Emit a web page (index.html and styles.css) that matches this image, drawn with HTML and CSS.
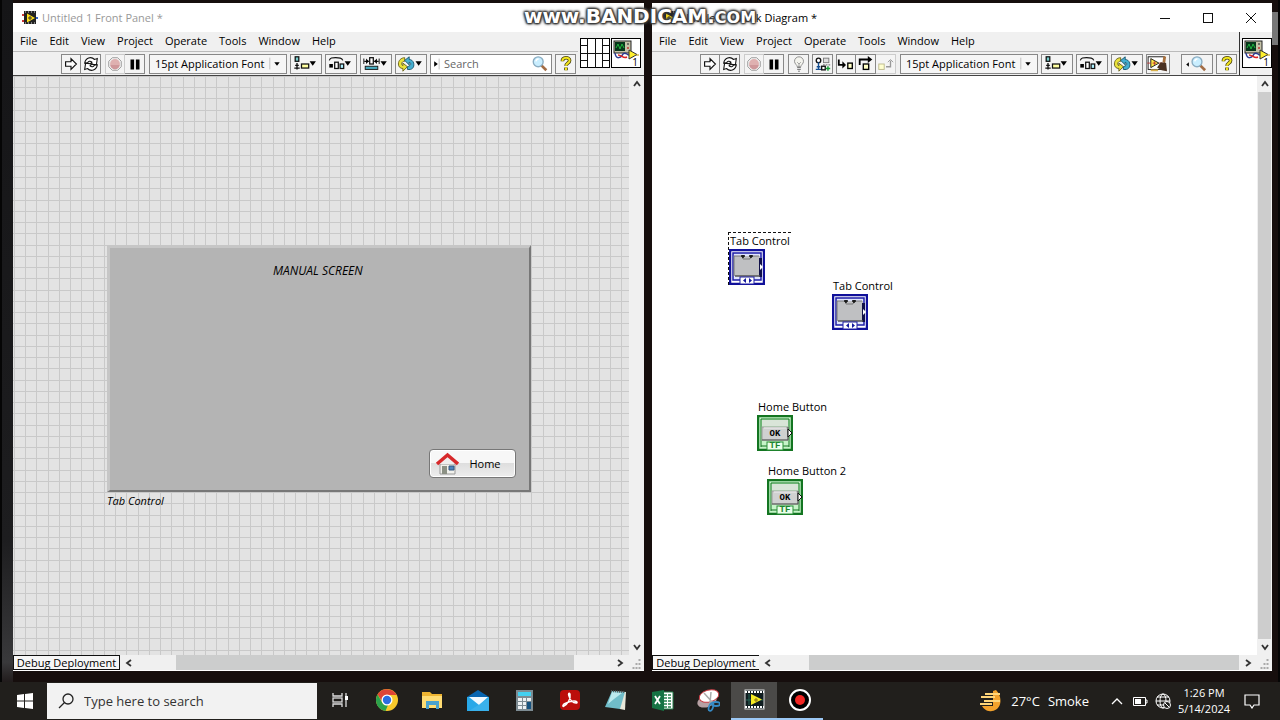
FILE: index.html
```html
<!DOCTYPE html>
<html lang="en">
<head>
<meta charset="utf-8">
<title>Untitled 1 Front Panel</title>
<link rel="stylesheet" href="styles.css">
</head>
<body>
<svg class="sprite" aria-hidden="true">
  <symbol id="app" viewBox="0 0 16 16">
    <path d="M0 5h3M0 11h3" stroke="#c33" stroke-width="2"/><path d="M13 8h3" stroke="#36c" stroke-width="2"/>
    <rect x="2" y="1" width="12" height="13" fill="#222"/><path d="M3 2h1M6 2h1M9 2h1M12 2h1M3 13h1M6 13h1M9 13h1M12 13h1" stroke="#ddd"/>
    <path d="M5 3.500L13 8 5 12.500z" fill="#ffe01a"/><path d="M6 8h4M8 6v4" stroke="#333"/>
  </symbol>
  <symbol id="run" viewBox="0 0 20 20"><path d="M4 7.500h6V4l6 6-6 6v-3.500H4z" fill="#fff" stroke="#111" stroke-width="1.300"/></symbol>
  <symbol id="runloop" viewBox="0 0 20 20"><g fill="#fff" stroke="#111" stroke-width="1.200"><path d="M3 9c1-6 7-8 11-4l3-1-1 7-7-1 2-2c-2-2-4-1-5 1z"/><path d="M17 11c-1 6-7 8-11 4l-3 1 1-7 7 1-2 2c2 2 4 1 5-1z"/></g></symbol>
  <symbol id="stop" viewBox="0 0 20 20"><path d="M7 3h6l4 4v6l-4 4H7l-4-4V7z" fill="#eee" stroke="#999"/><circle cx="10" cy="10" r="5.500" fill="#dfb0b0"/><path d="M5 11h10a5 5 0 0 1-10 0z" fill="#cf979a"/></symbol>
  <symbol id="pause" viewBox="0 0 20 20"><path d="M5 5h4v11H5zM11 5h4v11h-4z" fill="#000"/></symbol>
  <symbol id="bulb" viewBox="0 0 20 20"><path d="M8 13c0-2-3-3-3-6a5 5 0 0 1 10 0c0 3-3 4-3 6z" fill="#f4f4ee" stroke="#888"/><path d="M8 8l2 2 2-2M10 10v3" fill="none" stroke="#999"/><path d="M8 14h4M8 16h4M9 18h2" stroke="#666"/></symbol>
  <symbol id="retain" viewBox="0 0 20 20"><circle cx="5" cy="6" r="2.500" fill="#fff" stroke="#111" stroke-width="1.500"/><path d="M5 8v8M2 16h6M3 13h4" stroke="#124d91" stroke-width="1.500"/><rect x="10.500" y="3.500" width="6" height="5" fill="#ddd" stroke="#777"/><path d="M10 11h2M13 11h2M16 11h2" stroke="#555"/><rect x="8.500" y="12.500" width="4" height="4" fill="#fff" stroke="#111" stroke-width="1.500"/><path d="M13 15h5M15.500 12.500v5" stroke="#169b35" stroke-width="1.600"/></symbol>
  <symbol id="into" viewBox="0 0 20 20"><path d="M2 5v6h6" fill="none" stroke="#000" stroke-width="2"/><path d="M6 7l4 4-4 4z"/><rect x="12" y="9" width="5" height="6" fill="#ffffc4" stroke="#000" stroke-width="1.500"/></symbol>
  <symbol id="over" viewBox="0 0 20 20"><path d="M3 11V5h10" fill="none" stroke="#000" stroke-width="2"/><path d="M12 1l5 4-5 4z"/><rect x="7" y="10" width="6" height="6" fill="#ffffc4" stroke="#000" stroke-width="1.500"/></symbol>
  <symbol id="out" viewBox="0 0 20 20"><rect x="2" y="10" width="6" height="6" fill="#ffffd0" stroke="#bbb88a"/><path d="M10 13h5V6" fill="none" stroke="#999" stroke-width="1.500"/><path d="M12 8l3-3 3 3" fill="none" stroke="#999"/></symbol>
  <symbol id="align" viewBox="0 0 32 20"><rect x="4" y="2" width="4" height="5" fill="#7cc" stroke="#111" stroke-width="1.400"/><path d="M6 9v7M3 14.500h6M4 11.500h4" stroke="#111" stroke-width="1.500"/><rect x="11" y="10" width="8" height="4.500" fill="#ffffa0" stroke="#111" stroke-width="1.400"/><path d="M20 7h7l-3.500 5z"/></symbol>
  <symbol id="spread" viewBox="0 0 32 20"><path d="M3 6c1-3 3-3 7-3s7 0 8 3" fill="none" stroke="#111" stroke-width="1.300"/><path d="M3 10h4v4H3z"/><rect x="9" y="8" width="4" height="7" fill="#fff" stroke="#111" stroke-width="1.400"/><rect x="15" y="10" width="4" height="5" fill="#adf0ff" stroke="#111" stroke-width="1.400"/><path d="M20 7h7l-3.500 5z"/></symbol>
  <symbol id="resize" viewBox="0 0 32 20"><path d="M3 7h5M14 7h5" stroke="#111" stroke-width="1.500"/><path d="M5 4v6l3-3zM17 4v6l-3-3zM2 4h1v6H2zM19 4h1v6h-1z"/><rect x="9" y="3" width="4" height="7" fill="#fff" stroke="#111" stroke-width="1.400"/><rect x="4" y="12.500" width="14" height="3.500" fill="#48acc0" stroke="#111"/><path d="M21 7h7l-3.500 5z"/></symbol>
  <symbol id="reorder" viewBox="0 0 32 20"><path d="M9 3C5 3 2 6 2 10c0 3 2 5 5 5v3l5-5-5-4v3c-2-1-2-5 2-5z" fill="#e9e23b" stroke="#665f16"/><path d="M12 16c5 1 8-2 7-7-1-3-3-4-5-4V2L9 6l5 5V8c3 1 2 4-2 5z" fill="#45afd1" stroke="#17526b"/><path d="M21 7h7l-3.500 5z"/></symbol>
  <symbol id="broom" viewBox="0 0 24 20"><rect x="1" y="2" width="18" height="14" fill="#fff" stroke="#111"/><path d="M4 4l9 5-9 5z" fill="#ffe94a" stroke="#111"/><path d="M0 9h4M13 9h4M8 7v4M6 9h4" stroke="#b33"/><path d="M18 1l3 1-1 7-3-1z" fill="#a9713d"/><path d="M15 8l6 1 1 9-6-1-5-3z" fill="#4b3222"/><path d="M4 17h8" stroke="#d8b14d" stroke-width="2"/></symbol>
  <symbol id="lens" viewBox="0 0 18 20"><path d="M10 11l6 6" stroke="#a36d45" stroke-width="3"/><circle cx="7" cy="7.500" r="5.500" fill="#c9eeff" stroke="#8badc2" stroke-width="1.500"/><path d="M4.500 7a3 3 0 0 1 3-2.500" fill="none" stroke="#fff" stroke-width="1.500"/></symbol>
  <symbol id="help" viewBox="0 0 20 20"><path d="M6 7c0-5 8-5 8-1 0 3-4 3-4 6M10 14v3" fill="none" stroke="#4a430c" stroke-width="4"/><path d="M6 7c0-5 8-5 8-1 0 3-4 3-4 6M10 14v3" fill="none" stroke="#f3e61d" stroke-width="2.200"/></symbol>
  <symbol id="vi" viewBox="0 0 30 30"><rect width="30" height="30" fill="#fff" stroke="#000" stroke-width="2"/><rect x="3" y="3" width="17" height="12" fill="#c5c2a8" stroke="#222"/><rect x="4" y="4" width="10" height="9" fill="#07351b"/><path d="M5 10l2-4 2 5 2-5 2 4" fill="none" stroke="#22b53f"/><circle cx="17" cy="6" r="1" fill="#555"/><circle cx="17" cy="10" r="1" fill="#b33"/><path d="M4 15c1 7 6 5 8 1 3-3 4 2 7 1" fill="none" stroke="#2d3c91" stroke-width="1.500"/><path d="M7 17c4 0 5 4 9 2" fill="none" stroke="#d22" stroke-width="1.500"/><path d="M18 12l8 4.500-8 4.500z" fill="#fff02e" stroke="#333"/><path d="M25 17h3" stroke="#b90"/></symbol>
  <symbol id="up" viewBox="0 0 14 14"><path d="M4 9l3-4 3 4" fill="none" stroke="#333" stroke-width="1.800"/></symbol>
  <symbol id="down" viewBox="0 0 14 14"><path d="M4 5l3 4 3-4" fill="none" stroke="#333" stroke-width="1.800"/></symbol>
  <symbol id="left" viewBox="0 0 14 14"><path d="M9 4L5 7l4 3" fill="none" stroke="#333" stroke-width="1.800"/></symbol>
  <symbol id="right" viewBox="0 0 14 14"><path d="M5 4l4 3-4 3" fill="none" stroke="#333" stroke-width="1.800"/></symbol>
  <symbol id="grip" viewBox="0 0 14 14"><path d="M9 4h2M6 8h2M9 8h2M3 12h2M6 12h2M9 12h2" stroke="#aaa" stroke-width="2"/></symbol>
  <symbol id="tabterm" viewBox="0 0 36 36"><rect x="1" y="1" width="34" height="34" fill="#fff" stroke="#10109a" stroke-width="2.500"/><rect x="4" y="4" width="28" height="27" fill="#dfe4ff" stroke="#1c1ca8" stroke-width="1.500"/><rect x="5" y="7" width="26" height="20" fill="#bfc0c2"/><path d="M5 27V7h8l1 3h7l1-3h8" fill="none" stroke="#777"/><path d="M12 7h4M20 7h4M14 6v3M22 6v3" stroke="#111" stroke-width="1.500"/><path d="M30 9h3v19h-3z" fill="#111149"/><path d="M6 27h25" stroke="#555" stroke-width="1.500"/><path d="M31 15l3 3-3 3z" fill="#fff"/><rect x="11" y="28" width="14" height="7" fill="#fff" stroke="#2020a4"/><path d="M17 29v5l-3-2.500zM20 29v5l3-2.500z" fill="#151b9d"/></symbol>
  <symbol id="okterm" viewBox="0 0 36 36"><rect x="1" y="1" width="34" height="34" fill="#c6f4c8" stroke="#137521" stroke-width="2.500"/><path d="M4 32V4h28v28" fill="none" stroke="#137521"/><path d="M4 31h7M25 31h7" stroke="#137521"/><rect x="5" y="5" width="26" height="6" fill="#d9e5d8"/><rect x="5" y="12" width="26" height="13" fill="#d0d1d1" stroke="#999"/><path d="M5 25h26V12" fill="none" stroke="#555"/><path d="M7 13h22" stroke="#eee"/><path d="M31 14l4 4-4 4z" fill="#fff" stroke="#111"/><rect x="10" y="27" width="16" height="8" fill="#eaffea" stroke="#2a9138"/></symbol>
</svg>

<div class="desktop">
  <main class="workspace">
    <section class="window" aria-label="Front Panel">
      <header class="titlebar inactive"><svg class="app-icon"><use href="#app"/></svg><span>Untitled 1 Front Panel *</span></header>
      <div class="head">
        <div class="bars">
          <nav class="menu"><button>File</button><button>Edit</button><button>View</button><button>Project</button><button>Operate</button><button>Tools</button><button>Window</button><button>Help</button></nav>
          <div class="toolbar">
            <div class="group"><button class="tool" aria-label="Run"><svg><use href="#run"/></svg></button><button class="tool" aria-label="Run continuously"><svg><use href="#runloop"/></svg></button></div>
            <div class="group"><button class="tool faded" aria-label="Abort"><svg><use href="#stop"/></svg></button><button class="tool" aria-label="Pause"><svg><use href="#pause"/></svg></button></div>
            <div class="font-box"><select aria-label="Text settings"><option>15pt Application Font</option></select><svg viewBox="0 0 16 20"><path d="M0 3v13" stroke="#bbb"/><path d="M5 8h6l-3 4z"/></svg></div>
            <button class="tool wide" aria-label="Align objects"><svg><use href="#align"/></svg></button>
            <button class="tool wide" aria-label="Distribute objects"><svg><use href="#spread"/></svg></button>
            <button class="tool wide" aria-label="Resize objects"><svg><use href="#resize"/></svg></button>
            <button class="tool wide" aria-label="Reorder"><svg><use href="#reorder"/></svg></button>
            <label class="search"><svg class="search-scope" viewBox="0 0 10 20"><path d="M3 7l4 3-4 3z"/><path d="M8.500 4v12" stroke="#bbb"/></svg><input type="text" placeholder="Search" aria-label="Search"><svg class="search-lens"><use href="#lens"/></svg></label>
            <button class="tool" aria-label="Context help"><svg><use href="#help"/></svg></button>
          </div>
        </div>
        <div class="connector">
          <svg class="pane" viewBox="0 0 30 30"><rect width="30" height="30" fill="#fff" stroke="#000" stroke-width="2"/><path d="M7.500 0v30M15.500 0v30M22.500 0v30M0 15.500h30M0 7.500h8M0 22.500h8M23 7.500h7M23 22.500h7" stroke="#111"/></svg>
          <div class="vi"><svg><use href="#vi"/></svg><span>1</span></div>
        </div>
      </div>
      <div class="body">
        <div class="canvas panel">
          <div class="tab-control">
            <span class="screen-title">MANUAL SCREEN</span>
            <button class="home"><svg viewBox="0 0 24 24"><path d="M5 12h15v10H5z" fill="#f1f1ec" stroke="#999"/><path d="M4 12l8-7 8 7z" fill="#eee"/><path d="M7 14h5v8H7z" fill="#8c9185"/><path d="M14 14h5v4h-5z" fill="#4d84bd" stroke="#34577c"/><path d="M2 12L12.500 3 23 12" fill="none" stroke="#d7292b" stroke-width="3.500"/></svg><span>Home</span></button>
          </div>
          <span class="tab-label">Tab Control</span>
        </div>
        <div class="vscroll"><svg><use href="#up"/></svg><div class="track"></div><svg><use href="#down"/></svg></div>
      </div>
      <footer class="status"><button class="deploy boxed">Debug Deployment</button><svg><use href="#left"/></svg><div class="track"><div class="thumb"></div></div><svg><use href="#right"/></svg><svg class="grip"><use href="#grip"/></svg></footer>
    </section>

    <section class="window" aria-label="Block Diagram">
      <header class="titlebar"><svg class="app-icon"><use href="#app"/></svg><span>Untitled 1 Block Diagram *</span>
        <div class="controls">
          <button aria-label="Minimize"><svg viewBox="0 0 12 12"><path d="M1 6.500h10" stroke="#111"/></svg></button>
          <button aria-label="Maximize"><svg viewBox="0 0 12 12"><rect x="1.500" y="1.500" width="9" height="9" fill="none" stroke="#111"/></svg></button>
          <button aria-label="Close"><svg viewBox="0 0 12 12"><path d="M1 1l10 10M11 1L1 11" stroke="#111"/></svg></button>
        </div>
      </header>
      <div class="head">
        <div class="bars">
          <nav class="menu"><button>File</button><button>Edit</button><button>View</button><button>Project</button><button>Operate</button><button>Tools</button><button>Window</button><button>Help</button></nav>
          <div class="toolbar">
            <div class="group"><button class="tool" aria-label="Run"><svg><use href="#run"/></svg></button><button class="tool" aria-label="Run continuously"><svg><use href="#runloop"/></svg></button></div>
            <div class="group"><button class="tool faded" aria-label="Abort"><svg><use href="#stop"/></svg></button><button class="tool" aria-label="Pause"><svg><use href="#pause"/></svg></button></div>
            <button class="tool" aria-label="Highlight execution"><svg><use href="#bulb"/></svg></button>
            <button class="tool" aria-label="Retain wire values"><svg><use href="#retain"/></svg></button>
            <div class="group"><button class="tool" aria-label="Step into"><svg><use href="#into"/></svg></button><button class="tool" aria-label="Step over"><svg><use href="#over"/></svg></button><button class="tool faded" aria-label="Step out"><svg><use href="#out"/></svg></button></div>
            <div class="font-box"><select aria-label="Text settings"><option>15pt Application Font</option></select><svg viewBox="0 0 16 20"><path d="M0 3v13" stroke="#bbb"/><path d="M5 8h6l-3 4z"/></svg></div>
            <button class="tool wide" aria-label="Align objects"><svg><use href="#align"/></svg></button>
            <button class="tool wide" aria-label="Distribute objects"><svg><use href="#spread"/></svg></button>
            <button class="tool wide" aria-label="Reorder"><svg><use href="#reorder"/></svg></button>
            <button class="tool clean" aria-label="Clean up diagram"><svg><use href="#broom"/></svg></button>
            <button class="tool wide find" aria-label="Search"><svg viewBox="0 0 32 20"><path d="M7 8v5l-3-2.500z"/><use href="#lens" x="9" width="18" height="20"/></svg></button>
            <button class="tool" aria-label="Context help"><svg><use href="#help"/></svg></button>
          </div>
        </div>
        <div class="connector single"><div class="vi"><svg><use href="#vi"/></svg><span>1</span></div></div>
      </div>
      <div class="body">
        <div class="canvas diagram">
          <div class="node tab-a"><span>Tab Control</span><svg><use href="#tabterm"/></svg></div>
          <div class="node tab-b"><span>Tab Control</span><svg><use href="#tabterm"/></svg></div>
          <div class="node home-a"><span>Home Button</span><div class="terminal"><svg><use href="#okterm"/></svg><b>OK</b><i>TF</i></div></div>
          <div class="node home-b"><span>Home Button 2</span><div class="terminal"><svg><use href="#okterm"/></svg><b>OK</b><i>TF</i></div></div>
        </div>
        <div class="vscroll"><svg><use href="#up"/></svg><div class="track"><div class="thumb"></div></div><svg><use href="#down"/></svg></div>
      </div>
      <footer class="status long"><button class="deploy">Debug Deployment</button><svg><use href="#left"/></svg><div class="track"><div class="thumb"></div></div><svg><use href="#right"/></svg><svg class="grip"><use href="#grip"/></svg></footer>
    </section>
  </main>

  <footer class="taskbar">
    <button class="start" aria-label="Start"><svg viewBox="0 0 16 16"><path d="M0 2l7-1v6.500H0zM8 1l8-1v7.500H8zM0 8.500h7V15l-7-1zM8 8.500h8V16l-8-1z" fill="#fff"/></svg></button>
    <label class="task-search"><svg viewBox="0 0 16 16"><circle cx="10" cy="6" r="5" fill="none" stroke="#222" stroke-width="1.300"/><path d="M6.500 9.500L1 15" stroke="#222" stroke-width="1.300"/></svg><input type="text" placeholder="Type here to search" aria-label="Type here to search"></label>
    <button class="task" aria-label="Task view"><svg viewBox="0 0 24 24"><path d="M5 5v3h9V5M5 19v-3h9v3M18 5v14" fill="none" stroke="#ddd" stroke-width="1.300"/><rect x="5" y="10" width="9" height="4" fill="none" stroke="#ddd" stroke-width="1.300"/><path d="M17 8h3v4h-3z" fill="#fff"/></svg></button>
    <button class="task" aria-label="Chrome"><svg viewBox="0 0 24 24"><circle cx="13" cy="12" r="11" fill="#f7c92b"/><path d="M3.500 6.500A11 11 0 0 1 22.600 7H13a5 5 0 0 0-4.500 7z" fill="#df4435"/><path d="M3.500 6.500l5 8.500A5 5 0 0 0 14 17l-2.500 6A11 11 0 0 1 3.500 6.500z" fill="#2ba24c"/><circle cx="13" cy="12" r="5.500" fill="#fff"/><circle cx="13" cy="12" r="4.200" fill="#2b6de0"/></svg></button>
    <button class="task" aria-label="File Explorer"><svg viewBox="0 0 24 24"><path d="M2 4h8l2 2h10v14H2z" fill="#eeb431"/><path d="M2 8h20v12H2z" fill="#ffdc73"/><path d="M6 21v-8h13v8h-3v-4H9v4z" fill="#4aa2ce"/></svg></button>
    <button class="task" aria-label="Mail"><svg viewBox="0 0 24 24"><path d="M1 9l11-7 11 7v6H1z" fill="#0865b0"/><path d="M1 9h22v14H1z" fill="#28a8e8"/><path d="M3 9h19l-9 8z" fill="#f1f9ff"/><path d="M23 10v13H3z" fill="#49baf0" opacity=".5"/></svg></button>
    <button class="task" aria-label="Calculator"><svg viewBox="0 0 24 24"><rect x="4" y="2" width="17" height="21" fill="#7d8b92"/><path d="M6 4h13v4H6z" fill="#42d0f0"/><path d="M6 10h4v3H6zM11 10h3v3h-3zM15 10h4v3h-4zM6 14h4v3H6zM11 14h3v3h-3zM6 18h4v3H6zM11 18h3v3h-3z" fill="#edf1f3"/><path d="M15 14h4v7h-4z" fill="#17527e"/></svg></button>
    <button class="task" aria-label="Acrobat"><svg viewBox="0 0 24 24"><rect x="2" y="2" width="20" height="20" rx="4" fill="#bb0e0b"/><path d="M6 18c3-1 7-7 6-12-1-2-2 0-1 2 1 4 4 7 7 7 2 0 1-2-2-2-4 0-8 2-10 3-2 2-1 3 0 2z" fill="none" stroke="#fff" stroke-width="1.500"/></svg></button>
    <button class="task" aria-label="Notepad"><svg viewBox="0 0 24 24"><path d="M8 3l14 1-1 18-5-1z" fill="#e8e7d9"/><path d="M8 3l13 1-5 17L1 19z" fill="#70bdc9"/><path d="M8 4l10 1-8 6-6 5z" fill="#bce9ed"/><path d="M7 3l14 1" stroke="#555" stroke-width="2" stroke-dasharray="1 1"/></svg></button>
    <button class="task" aria-label="Excel"><svg viewBox="0 0 24 24"><path d="M12 4h11v17H12z" fill="#fff" stroke="#26804d"/><path d="M14 7h3M18 7h3M14 10h3M18 10h3M14 13h3M18 13h3M14 16h3M18 16h3M14 19h3M18 19h3" stroke="#25804c" stroke-width="1.500"/><path d="M2 4l12-2v21L2 20z" fill="#167344"/><path d="M5 8l5 8M10 8l-5 8" stroke="#fff" stroke-width="1.800"/></svg></button>
    <button class="task" aria-label="Snipping tool"><svg viewBox="0 0 24 24"><ellipse cx="11" cy="13" rx="10" ry="6" transform="rotate(-20 11 13)" fill="#b7a0a3"/><ellipse cx="13" cy="8" rx="10" ry="6" transform="rotate(-15 13 8)" fill="#fff" stroke="#c73b43"/><path d="M8 5l9 10M15 4l-1 11" stroke="#aaa" stroke-width="1.500"/><g fill="none" stroke="#368ac5" stroke-width="1.800"><ellipse cx="15" cy="19" rx="2" ry="4" transform="rotate(20 15 19)"/><ellipse cx="20" cy="16" rx="4" ry="2"/></g></svg></button>
    <button class="task active" aria-label="LabVIEW"><svg viewBox="0 0 24 24"><rect x="3" y="2" width="19" height="19" fill="#101d20" stroke="#ddd"/><path d="M3 4h19M3 19h19" stroke="#fff" stroke-width="2" stroke-dasharray="2 1"/><path d="M4 12h17M7 6v11" stroke="#276757"/><path d="M9 6l11 5.500L9 17z" fill="#f5ec25"/><path d="M12 12h4M14 10v4" stroke="#886f10"/></svg></button>
    <button class="task open" aria-label="Bandicam"><svg viewBox="0 0 24 24"><circle cx="12" cy="12" r="10" fill="#000" stroke="#fff" stroke-width="2"/><circle cx="12" cy="12" r="5" fill="#f22522"/></svg></button>
    <div class="tray">
      <button class="weather"><svg viewBox="0 0 24 24"><path d="M17 1c7 7 6 20-4 21-5 1-8-2-10-5h11V2z" fill="#f3a22c"/><path d="M6 5h15M2 8h14M5 12h16M1 15h12" stroke="#ffd579" stroke-width="1.800"/></svg><span>27°C</span><span>Smoke</span></button>
      <button aria-label="Hidden icons"><svg viewBox="0 0 16 16"><path d="M3 11l5-5 5 5" fill="none" stroke="#fff" stroke-width="1.300"/></svg></button>
      <button aria-label="Battery"><svg viewBox="0 0 16 16"><path d="M1.500 4.500h12v8h-12zM14 7h1v3h-1" fill="none" stroke="#fff"/><path d="M3 6h6v5H3z" fill="#fff"/></svg></button>
      <button aria-label="Network"><svg viewBox="0 0 16 16"><g fill="none" stroke="#fff"><circle cx="8" cy="8" r="7"/><ellipse cx="8" cy="8" rx="3" ry="7"/><path d="M1 8h14M2 4h12M2 12h7"/></g><circle cx="12" cy="12" r="3.500" fill="#1f1e1c" stroke="#fff"/><path d="M10 10l4 4" stroke="#fff"/></svg></button>
      <button class="clock"><span>1:26 PM</span><span>5/14/2024</span></button>
      <button class="notice" aria-label="Notifications"><svg viewBox="0 0 16 16"><path d="M1 2h14v10h-5l-2 3-2-3H1z" fill="none" stroke="#fff" stroke-width="1.200"/></svg></button>
    </div>
  </footer>
  <div class="watermark">www.<b>BANDICAM</b>.<small>COM</small></div>
</div>
</body>
</html>
```

FILE: styles.css
```css
* { box-sizing: border-box; }
body { margin: 0; font-family: "Open Sans", "Noto Sans", sans-serif; font-size: 11px; line-height: 16px; color: #000; }
button, input, select { font: inherit; color: inherit; border: 0; padding: 0; margin: 0; background: none; }
button { display: flex; align-items: center; justify-content: center; white-space: nowrap; }
svg { display: block; flex: none; }
.sprite { position: absolute; width: 0; height: 0; }
.desktop {
  position: relative; display: flex; flex-direction: column; height: 100vh; overflow: hidden;
  background-color: #160e0d;
  background-image:
    linear-gradient(#777, #777),
    linear-gradient(#050505, #050505),
    linear-gradient(#050505, #050505),
    linear-gradient(#151517, #1d1d1f 75%, #39393b 92%, #160e0d 96%);
  background-size: 6px 33px, 2px 100%, 2px 100%, 13px 100%;
  background-position: right 2px top 12px, left top, right top, left top;
  background-repeat: no-repeat;
}
.workspace { flex: 1; min-height: 0; display: grid; grid-template-columns: 631fr 620fr; gap: 8px; padding: 3px 8px 11px 13px; }
.window { display: flex; flex-direction: column; min-width: 0; min-height: 0; background: #f0f0f0; border-bottom: 1px solid #fff; }

.titlebar { display: flex; align-items: center; gap: 4px; height: 29px; padding-left: 9px; background: #fff; }
.inactive { color: #999; }
.app-icon { width: 16px; height: 16px; }
.controls { display: flex; margin-left: auto; }
.controls button { width: 43px; height: 28px; }
.controls svg { width: 12px; height: 12px; }

.head { display: flex; height: 44px; border-bottom: 1px solid #444; }
.bars { flex: 1; min-width: 0; }
.menu { display: flex; gap: 12px; height: 20px; padding: 0 0 1px 7px; border-bottom: 1px solid #bbb; }
.toolbar { display: flex; gap: 3px; padding: 2px 2px 0 48px; }
.group { display: flex; margin-right: 1px; }
.tool { width: 21px; height: 20px; border: 1px solid #888; background: #f4f4f4; }
.group .tool { width: 20px; }
.group .tool + .tool { border-left: 0; }
.tool svg { width: 18px; height: 18px; }
.tool.wide { width: 32px; }
.tool.wide svg { width: 30px; height: 18px; }
.tool.clean { width: 24px; }
.tool.clean svg { width: 22px; }
.tool.find { margin-left: auto; }
.faded { border-color: #ccc; }
.font-box { position: relative; width: 138px; height: 20px; border: 1px solid #888; background: #f6f6f6; }
.font-box select { appearance: none; width: 100%; height: 18px; padding-left: 5px; }
.font-box svg { position: absolute; right: 1px; top: 0; width: 16px; height: 18px; pointer-events: none; }
.search { flex: 1; min-width: 0; display: flex; align-items: center; height: 20px; border: 1px solid #888; background: #fff; }
.search-scope { width: 10px; height: 18px; }
.search input { flex: 1; width: 20px; padding-left: 3px; }
.search-lens { width: 22px; height: 18px; }
input::placeholder { color: #666; opacity: 1; }
.connector { display: flex; align-items: flex-start; gap: 1px; padding: 6px 3px 0 2px; }
.connector.single { padding: 6px 0 0 2px; border-left: 1px solid #333; }
.pane, .vi svg { width: 30px; height: 30px; }
.vi { position: relative; }
.vi span { position: absolute; right: 3px; bottom: 1px; font-size: 10px; line-height: 10px; }

.body { flex: 1; min-height: 0; display: flex; }
.canvas { position: relative; flex: 1; overflow: hidden; background: #fff; }
.panel {
  background-color: #e3e3e3;
  background-position: 1px 0;
  background-image:
    repeating-linear-gradient(90deg, #c9c9c9 0 1px, transparent 1px 11px, #c9c9c9 11px 12px, transparent 12px 22px, #c9c9c9 22px 23px, transparent 23px 34px, #c9c9c9 34px 35px, transparent 35px 45px),
    repeating-linear-gradient(180deg, #c9c9c9 0 1px, transparent 1px 11px, #c9c9c9 11px 12px, transparent 12px 22px, #c9c9c9 22px 23px, transparent 23px 34px, #c9c9c9 34px 35px, transparent 35px 45px);
}
.tab-control { position: absolute; left: 94px; top: 169px; width: 424px; height: 247px; background: #b4b4b4; border: 3px solid; border-color: #c6c6c6 #777 #777 #c6c6c6; border-right-width: 2px; border-bottom-width: 2px; }
.screen-title { position: absolute; left: 163px; top: 15px; font-size: 12px; font-style: italic; }
.home { position: absolute; right: 13px; bottom: 12px; width: 87px; height: 29px; gap: 10px; padding-right: 9px; border: 1px solid #777; border-radius: 4px; background: linear-gradient(#f7f7f7 50%, #dedede 50%, #eee); box-shadow: inset 0 0 0 1px #fff; }
.home svg { width: 24px; height: 24px; }
.tab-label { position: absolute; left: 94px; top: 417px; font-style: italic; }
.vscroll { display: flex; flex-direction: column; align-items: center; width: 15px; background: #f0f0f0; }
.vscroll > svg { width: 14px; height: 16px; }
.vscroll .track { flex: 1; width: 13px; }
.vscroll .thumb { height: 100%; background: #cdcdcd; }
.status { display: flex; align-items: center; height: 15px; }
.status > svg { width: 18px; height: 14px; }
.status > svg.grip { width: 15px; }
.deploy { width: 107px; height: 15px; border: 1px solid #111; border-right: 0; background: #f6f6f6; }
.deploy.boxed { border-right: 1px solid #111; }
.status .track { flex: 1; height: 15px; padding: 0 37px 0 38px; }
.status .thumb { height: 15px; background: #cccdcd; }
.long .track { padding: 0 0 0 32px; }

.node { position: absolute; }
.node > span { display: block; padding-left: 1px; white-space: nowrap; }
.node svg { width: 36px; height: 36px; }
.tab-a { left: 76px; top: 156px; width: 63px; border-top: 1px dashed #111; border-left: 1px dashed #111; }
.tab-b { left: 180px; top: 202px; }
.home-a { left: 105px; top: 323px; }
.home-b { left: 115px; top: 387px; }
.terminal { position: relative; width: 36px; height: 36px; }
.terminal b, .terminal i { position: absolute; left: 0; right: 0; text-align: center; font-family: "Liberation Mono", monospace; line-height: 8px; }
.terminal b { top: 15px; font-size: 9px; }
.terminal i { top: 27px; font-size: 9px; font-style: normal; font-weight: bold; color: #208530; }

.taskbar { display: flex; height: 38px; padding-left: 2px; background: #211f1c; color: #fff; }
.start { width: 45px; }
.start svg { width: 16px; height: 16px; }
.task-search { display: flex; align-items: center; width: 270px; gap: 10px; margin: 1px 0; padding-left: 11px; background: #f2f2f2; color: #333; font-size: 13px; }
.task-search svg { width: 16px; height: 16px; }
.task-search input { width: 200px; height: 28px; }
.task-search input::placeholder { color: #333; }
.task { width: 46px; border-bottom: 2px solid transparent; }
.task svg { width: 24px; height: 24px; }
.task.active { background: #4b4a48; border-color: #9cc8f4; }
.task.open { border-color: #9cc8f4; }
.tray { display: flex; margin-left: auto; padding-right: 14px; }
.tray button { width: 23px; }
.tray button svg { width: 16px; height: 16px; }
.tray .weather { width: auto; gap: 8px; margin-right: 16px; font-size: 13px; }
.tray .weather svg { width: 24px; height: 24px; }
.tray .clock { flex-direction: column; width: 60px; }
.tray .notice { width: 32px; padding-left: 4px; }

.watermark { position: absolute; left: 0; right: 0; top: 5px; text-align: center; font-family: "DejaVu Sans", sans-serif; font-weight: bold; font-size: 20px; line-height: 22px; color: #fff; text-shadow: 0 0 2px #333, 1px 1px 2px #333, -1px -1px 2px #444, 1px -1px 2px #444, -1px 1px 2px #444, 0 0 4px #555; pointer-events: none; }
.watermark small { font-size: 16px; }
```
